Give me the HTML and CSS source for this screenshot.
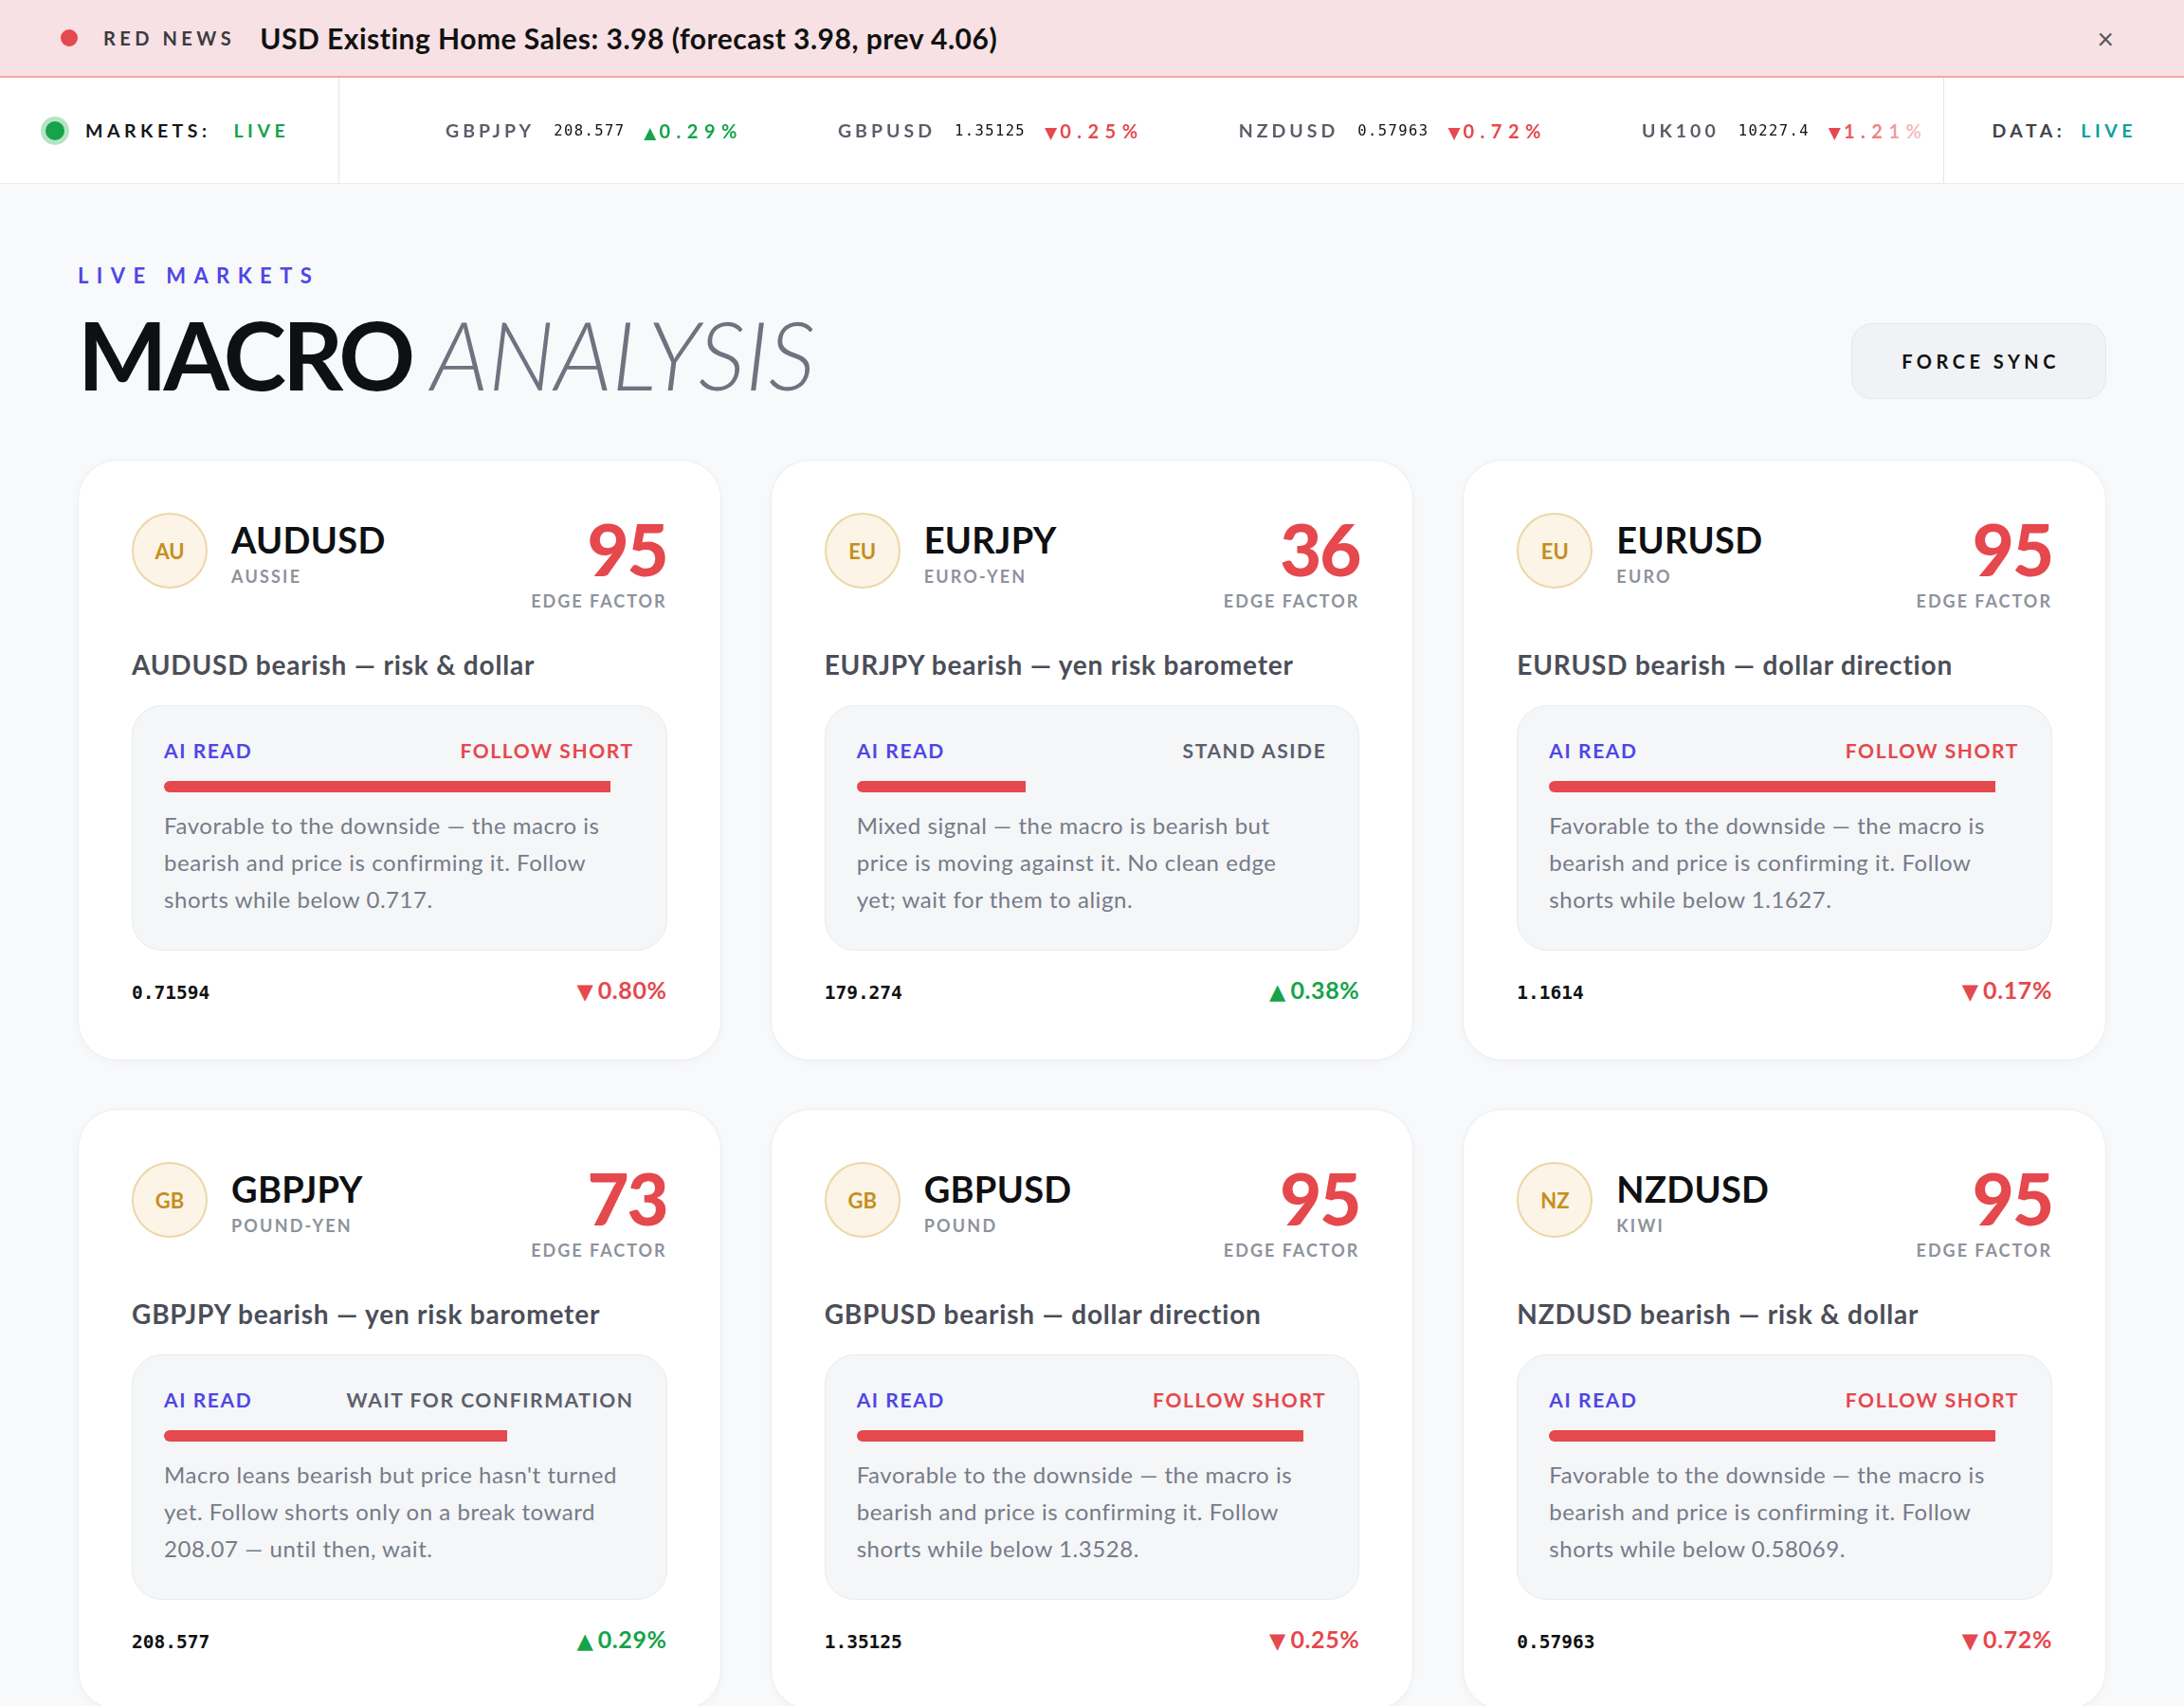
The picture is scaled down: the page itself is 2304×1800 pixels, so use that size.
FILE: index.html
```html
<!DOCTYPE html>
<html lang="en">
<head>
    <meta charset="UTF-8">
    <meta name="viewport" content="width=device-width, initial-scale=1.0">
    <title>Macro Analysis</title>
    <link rel="stylesheet" href="styles.css">
</head>
<body>

<!-- Red news banner -->
<div class="news-bar">
    <span class="news-dot"></span>
    <span class="news-label">RED NEWS</span>
    <span class="news-text">USD Existing Home Sales: 3.98 (forecast 3.98, prev 4.06)</span>
    <span class="news-close">&times;</span>
</div>

<!-- Market ticker -->
<div class="markets-bar">
    <div class="status status-left">
        <span class="live-dot"></span>
        <span>MARKETS:</span>
        <span class="live">LIVE</span>
    </div>
    <div class="ticker">
        <div class="tick"><span class="tick-name">GBPJPY</span><span class="tick-price">208.577</span><span class="tick-pct up"><span class="tri">&#9650;</span>0.29%</span></div>
        <div class="tick"><span class="tick-name">GBPUSD</span><span class="tick-price">1.35125</span><span class="tick-pct down"><span class="tri">&#9660;</span>0.25%</span></div>
        <div class="tick"><span class="tick-name">NZDUSD</span><span class="tick-price">0.57963</span><span class="tick-pct down"><span class="tri">&#9660;</span>0.72%</span></div>
        <div class="tick"><span class="tick-name">UK100</span><span class="tick-price">10227.4</span><span class="tick-pct down"><span class="tri">&#9660;</span>1.21%</span></div>
    </div>
    <div class="status status-right">
        <span>DATA:</span>
        <span class="live teal">LIVE</span>
    </div>
</div>

<main class="page">
    <div class="page-head">
        <div>
            <div class="eyebrow">LIVE MARKETS</div>
            <h1 class="title">MACRO <span class="title-light">ANALYSIS</span></h1>
        </div>
        <button class="sync-btn" type="button">FORCE SYNC</button>
    </div>

    <div class="grid">

        <div class="card">
            <div class="card-head">
                <div class="pair">
                    <div class="avatar">AU</div>
                    <div>
                        <div class="pair-name">AUDUSD</div>
                        <div class="pair-nick">AUSSIE</div>
                    </div>
                </div>
                <div class="edge">
                    <div class="edge-score">95</div>
                    <div class="edge-label">EDGE FACTOR</div>
                </div>
            </div>
            <div class="card-title">AUDUSD bearish — risk &amp; dollar</div>
            <div class="read">
                <div class="read-head"><span class="read-tag">AI READ</span><span class="verdict short">FOLLOW SHORT</span></div>
                <div class="bar"><div class="bar-fill" style="width: 95%"></div></div>
                <p class="read-text">Favorable to the downside — the macro is bearish and price is confirming it. Follow shorts while below 0.717.</p>
            </div>
            <div class="card-foot">
                <span class="price">0.71594</span>
                <span class="change down"><span class="tri">&#9660;</span>0.80%</span>
            </div>
        </div>

        <div class="card">
            <div class="card-head">
                <div class="pair">
                    <div class="avatar">EU</div>
                    <div>
                        <div class="pair-name">EURJPY</div>
                        <div class="pair-nick">EURO-YEN</div>
                    </div>
                </div>
                <div class="edge">
                    <div class="edge-score">36</div>
                    <div class="edge-label">EDGE FACTOR</div>
                </div>
            </div>
            <div class="card-title">EURJPY bearish — yen risk barometer</div>
            <div class="read">
                <div class="read-head"><span class="read-tag">AI READ</span><span class="verdict">STAND ASIDE</span></div>
                <div class="bar"><div class="bar-fill" style="width: 36%"></div></div>
                <p class="read-text">Mixed signal — the macro is bearish but price is moving against it. No clean edge yet; wait for them to align.</p>
            </div>
            <div class="card-foot">
                <span class="price">179.274</span>
                <span class="change up"><span class="tri">&#9650;</span>0.38%</span>
            </div>
        </div>

        <div class="card">
            <div class="card-head">
                <div class="pair">
                    <div class="avatar">EU</div>
                    <div>
                        <div class="pair-name">EURUSD</div>
                        <div class="pair-nick">EURO</div>
                    </div>
                </div>
                <div class="edge">
                    <div class="edge-score">95</div>
                    <div class="edge-label">EDGE FACTOR</div>
                </div>
            </div>
            <div class="card-title">EURUSD bearish — dollar direction</div>
            <div class="read">
                <div class="read-head"><span class="read-tag">AI READ</span><span class="verdict short">FOLLOW SHORT</span></div>
                <div class="bar"><div class="bar-fill" style="width: 95%"></div></div>
                <p class="read-text">Favorable to the downside — the macro is bearish and price is confirming it. Follow shorts while below 1.1627.</p>
            </div>
            <div class="card-foot">
                <span class="price">1.1614</span>
                <span class="change down"><span class="tri">&#9660;</span>0.17%</span>
            </div>
        </div>

        <div class="card">
            <div class="card-head">
                <div class="pair">
                    <div class="avatar">GB</div>
                    <div>
                        <div class="pair-name">GBPJPY</div>
                        <div class="pair-nick">POUND-YEN</div>
                    </div>
                </div>
                <div class="edge">
                    <div class="edge-score">73</div>
                    <div class="edge-label">EDGE FACTOR</div>
                </div>
            </div>
            <div class="card-title">GBPJPY bearish — yen risk barometer</div>
            <div class="read">
                <div class="read-head"><span class="read-tag">AI READ</span><span class="verdict">WAIT FOR CONFIRMATION</span></div>
                <div class="bar"><div class="bar-fill" style="width: 73%"></div></div>
                <p class="read-text">Macro leans bearish but price hasn't turned yet. Follow shorts only on a break toward 208.07 — until then, wait.</p>
            </div>
            <div class="card-foot">
                <span class="price">208.577</span>
                <span class="change up"><span class="tri">&#9650;</span>0.29%</span>
            </div>
        </div>

        <div class="card">
            <div class="card-head">
                <div class="pair">
                    <div class="avatar">GB</div>
                    <div>
                        <div class="pair-name">GBPUSD</div>
                        <div class="pair-nick">POUND</div>
                    </div>
                </div>
                <div class="edge">
                    <div class="edge-score">95</div>
                    <div class="edge-label">EDGE FACTOR</div>
                </div>
            </div>
            <div class="card-title">GBPUSD bearish — dollar direction</div>
            <div class="read">
                <div class="read-head"><span class="read-tag">AI READ</span><span class="verdict short">FOLLOW SHORT</span></div>
                <div class="bar"><div class="bar-fill" style="width: 95%"></div></div>
                <p class="read-text">Favorable to the downside — the macro is bearish and price is confirming it. Follow shorts while below 1.3528.</p>
            </div>
            <div class="card-foot">
                <span class="price">1.35125</span>
                <span class="change down"><span class="tri">&#9660;</span>0.25%</span>
            </div>
        </div>

        <div class="card">
            <div class="card-head">
                <div class="pair">
                    <div class="avatar">NZ</div>
                    <div>
                        <div class="pair-name">NZDUSD</div>
                        <div class="pair-nick">KIWI</div>
                    </div>
                </div>
                <div class="edge">
                    <div class="edge-score">95</div>
                    <div class="edge-label">EDGE FACTOR</div>
                </div>
            </div>
            <div class="card-title">NZDUSD bearish — risk &amp; dollar</div>
            <div class="read">
                <div class="read-head"><span class="read-tag">AI READ</span><span class="verdict short">FOLLOW SHORT</span></div>
                <div class="bar"><div class="bar-fill" style="width: 95%"></div></div>
                <p class="read-text">Favorable to the downside — the macro is bearish and price is confirming it. Follow shorts while below 0.58069.</p>
            </div>
            <div class="card-foot">
                <span class="price">0.57963</span>
                <span class="change down"><span class="tri">&#9660;</span>0.72%</span>
            </div>
        </div>

    </div>
</main>

</body>
</html>
```

FILE: styles.css
```css
body {
  margin: 0;
  font-family: Lato, "Noto Sans", sans-serif;
  background-color: #f8f9fa;
  color: #111;
}

/* news banner */
.news-bar {
  display: flex;
  align-items: center;
  height: 80px;
  padding: 0 74px 0 64px;
  background: #f7e1e4;
  border-bottom: 2px solid #f3a6a9;
}
.news-dot {
  width: 18px;
  height: 18px;
  border-radius: 50%;
  background: #e5484d;
  margin-right: 27px;
}
.news-label {
  font-size: 20px;
  font-weight: 700;
  letter-spacing: 4.5px;
  color: #3a3b42;
  margin-right: 26px;
}
.news-text {
  flex: 1;
  font-size: 30px;
  font-weight: 700;
  letter-spacing: 0.5px;
  color: #111;
}
.news-close {
  font-size: 30px;
  color: #555;
}

/* markets ticker */
.markets-bar {
  display: flex;
  height: 111px;
  background: #fff;
  border-bottom: 1px solid #ebebeb;
}
.status {
  display: flex;
  align-items: center;
  gap: 24px;
  padding: 0 50px;
  font-size: 19.5px;
  font-weight: 700;
  letter-spacing: 4.5px;
  color: #15161a;
}
.status-left {
  width: 358px;
  box-sizing: border-box;
  padding-left: 48px;
  border-right: 1px solid #e6e6e6;
}
.status-right {
  border-left: 1px solid #e6e6e6;
  gap: 16px;
  color: #3f434c;
}
.live-dot {
  width: 20px;
  height: 20px;
  border-radius: 50%;
  background: #16a34a;
  box-shadow: 0 0 0 5px #b5e4c5;
  margin-right: -2px;
}
.live {
  color: #16a34a;
}
.live.teal {
  color: #0f9f9a;
}
.ticker {
  flex: 1;
  display: flex;
  align-items: center;
  gap: 100px;
  padding-left: 112px;
  overflow: hidden;
  white-space: nowrap;
  -webkit-mask-image: linear-gradient(to right, transparent 0, #000 60px, #000 calc(100% - 110px), rgba(0, 0, 0, 0.15) 100%);
  mask-image: linear-gradient(to right, transparent 0, #000 60px, #000 calc(100% - 110px), rgba(0, 0, 0, 0.15) 100%);
}
.tick {
  display: flex;
  align-items: center;
  gap: 20px;
}
.tick-name {
  font-size: 19.5px;
  font-weight: 700;
  letter-spacing: 4px;
  color: #5a5e69;
}
.tick-price {
  font-family: "DejaVu Sans Mono", monospace;
  font-size: 15.5px;
  letter-spacing: 1.4px;
  color: #111;
}
.tick-pct {
  font-size: 20px;
  font-weight: 700;
  letter-spacing: 6.5px;
}
.up {
  color: #16a34a;
}
.down {
  color: #e5484d;
}
.tri {
  font-family: "DejaVu Sans", sans-serif;
  font-size: 0.85em;
  letter-spacing: 0;
  margin-right: 3px;
}

/* page */
.page {
  padding: 83px 82px 0;
}
.page-head {
  display: flex;
  justify-content: space-between;
  align-items: flex-end;
  margin-bottom: 62px;
}
.eyebrow {
  font-size: 22px;
  font-weight: 700;
  letter-spacing: 8.4px;
  color: #4f46e5;
  margin-bottom: 19px;
}
.title {
  margin: 0;
  font-size: 100px;
  line-height: 1;
  font-weight: 700;
  letter-spacing: -4px;
  color: #0f1012;
}
.title-light {
  font-weight: 300;
  font-style: italic;
  letter-spacing: -0.3px;
  color: #6f7380;
}
.sync-btn {
  font-family: Lato, "Noto Sans", sans-serif;
  font-size: 20px;
  font-weight: 700;
  letter-spacing: 4.5px;
  color: #111;
  background: #f0f2f5;
  border: 1px solid #e5e7eb;
  border-radius: 22px;
  padding: 27px 48px 27px 52px;
  margin-bottom: 2px;
}

/* cards */
.grid {
  display: grid;
  grid-template-columns: repeat(3, 1fr);
  gap: 51px 52px;
}
.card {
  background: #fff;
  border: 1px solid #eceef1;
  border-radius: 42px;
  padding: 55px 56px 56px;
  box-shadow: 0 2px 10px rgba(0, 0, 0, 0.03);
}
.card-head {
  display: flex;
  justify-content: space-between;
  align-items: flex-start;
}
.pair {
  display: flex;
  align-items: center;
  gap: 25px;
}
.avatar {
  width: 76px;
  height: 76px;
  border-radius: 50%;
  background: #fbf4e7;
  border: 2px solid #ecd7a8;
  color: #c58f1e;
  font-size: 22px;
  font-weight: 700;
  display: flex;
  align-items: center;
  justify-content: center;
}
.pair-name {
  font-size: 38px;
  font-weight: 700;
  line-height: 44px;
  letter-spacing: 0.3px;
  color: #0f1012;
  margin-top: 4px;
}
.pair-nick {
  font-size: 18px;
  font-weight: 700;
  line-height: 22px;
  letter-spacing: 2.2px;
  color: #8e929c;
  margin-top: 6px;
}
.edge {
  text-align: right;
}
.edge-score {
  font-size: 76px;
  font-weight: 900;
  line-height: 1;
  letter-spacing: -2px;
  color: #e5484d;
}
.edge-label {
  font-size: 18px;
  font-weight: 700;
  line-height: 22px;
  letter-spacing: 2px;
  color: #8e929c;
  margin-top: 6px;
}
.card-title {
  font-size: 28px;
  font-weight: 700;
  line-height: 34px;
  letter-spacing: 0.8px;
  color: #4b4e59;
  margin-top: 39px;
}
.read {
  margin-top: 26px;
  background: #f4f6f8;
  border: 1px solid #e9ebee;
  border-radius: 32px;
  padding: 34px 34px 34px 33px;
}
.read-head {
  display: flex;
  justify-content: space-between;
  font-size: 21px;
  font-weight: 700;
  line-height: 25px;
  letter-spacing: 1.6px;
}
.read-tag {
  color: #4f46e5;
}
.verdict {
  color: #5c606c;
}
.verdict.short {
  color: #e5484d;
}
.bar {
  margin-top: 20px;
  height: 12px;
  border-radius: 6px;
  overflow: hidden;
}
.bar-fill {
  height: 100%;
  background: #e5484d;
}
.read-text {
  margin: 15px 0 0;
  max-width: 490px;
  font-size: 24px;
  font-weight: 400;
  line-height: 39px;
  letter-spacing: 0.55px;
  color: #777b88;
}
.card-foot {
  display: flex;
  justify-content: space-between;
  align-items: baseline;
  margin-top: 27px;
  line-height: 28px;
}
.price {
  font-family: "DejaVu Sans Mono", monospace;
  font-size: 19.5px;
  font-weight: 700;
  color: #111;
}
.change {
  font-size: 25px;
  font-weight: 700;
  letter-spacing: 0.6px;
}
.change .tri {
  font-size: 0.9em;
  margin-right: 5px;
}
```
